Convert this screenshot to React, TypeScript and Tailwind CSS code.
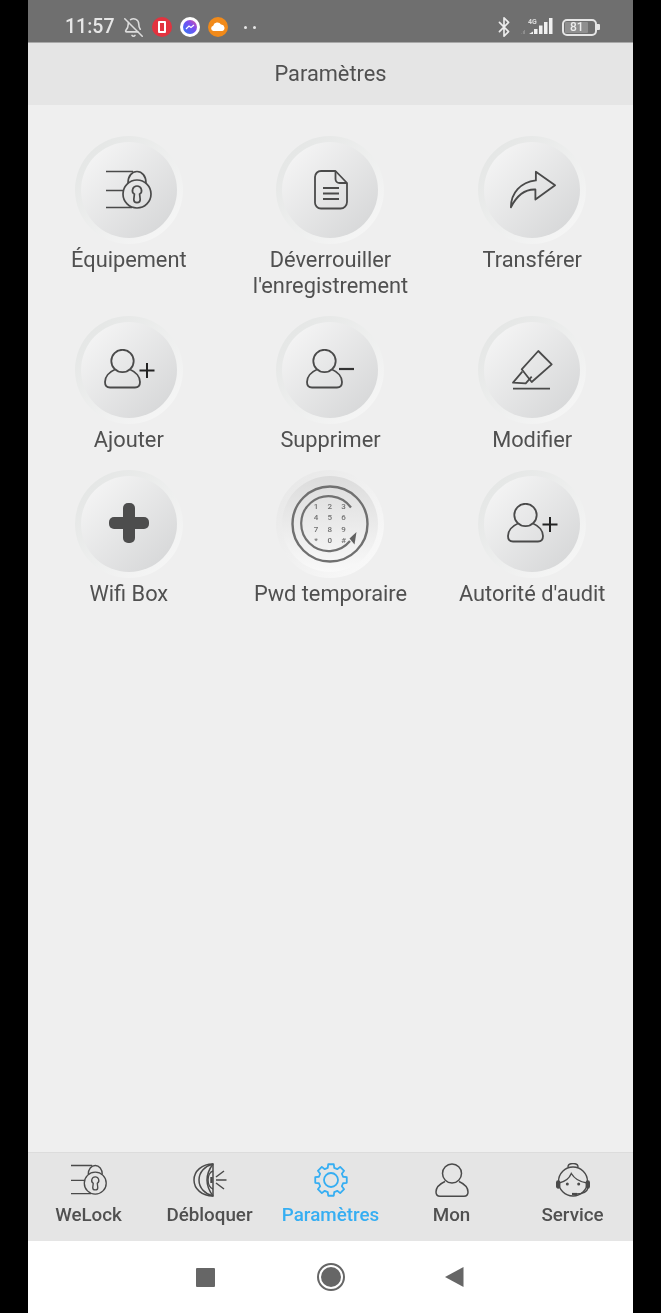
import React from "react";
import { BellOff, Bluetooth } from "lucide-react";

const INK = "#4a4a4a";

function PersonPath({ stroke = INK }: { stroke?: string }) {
  return (
    <g fill="none" stroke={stroke} strokeWidth={1.800} strokeLinejoin="round">
      <circle cx={18.500} cy={12} r={11.200} />
      <path d="M11 20.500C5 23 1 28 1 33c0 3.500 2 5.500 5 5.500h25c3 0 5-2 5-5.500 0-5-4-10-10-12.500" />
    </g>
  );
}

const LockIcon = ({ w = 46, h = 40 }: { w?: number; h?: number }) => (
  <svg width={w} height={h} viewBox="0 0 46 40" fill="none" stroke={INK} strokeWidth={1.700}>
    <path d="M0 1.500h27M0 20.500h18M0 37.500h26" />
    <circle cx={31} cy={24} r={14} />
    <path d="M22 13C22 6 26 1.500 31 1.500S40 6 40 13" />
    <path d="M31 16a4.500 4.500 0 0 1 2.600 8.200l.6 5.300a3.200 3.200 0 0 1-6.400 0l.6-5.300A4.500 4.500 0 0 1 31 16z" />
  </svg>
);

const DocIcon = () => (
  <svg className="ml-[1px]" width={34} height={40} viewBox="0 0 34 40" fill="none" stroke={INK} strokeWidth={1.800} strokeLinejoin="round">
    <path d="M7 1h14.500L33 13v19a6.500 6.500 0 0 1-6.500 6.500H7A6 6 0 0 1 1 32V7a6 6 0 0 1 6-6z" />
    <path d="M21.500 1v8a4 4 0 0 0 4 4H33" />
    <path d="M9 18h16M9 23.500h16M9 29h16" />
  </svg>
);

const ShareIcon = () => (
  <svg className="ml-[1px]" width={48} height={42} viewBox="0 0 50 42" fill="none" stroke={INK} strokeWidth={1.900} strokeLinejoin="round">
    <path d="M48 16 28 2v9C12 13 2 24 2 39c6-12 14-19 25.500-18.500V31z" />
  </svg>
);

const PersonPlus = () => (
  <svg className="mb-[2px] ml-[1px]" width={51} height={40} viewBox="0 0 51 40">
    <PersonPath />
    <path d="M43 14v15M35.500 21.500h15" stroke="#222" strokeWidth={2} fill="none" />
  </svg>
);

const PersonMinus = () => (
  <svg className="mb-[2px] ml-[1px]" width={50} height={40} viewBox="0 0 50 40">
    <PersonPath />
    <path d="M33 20h15" stroke="#333" strokeWidth={2.200} fill="none" />
  </svg>
);

const EditIcon = () => (
  <svg width={42} height={42} viewBox="0 0 42 42" fill="none" stroke={INK} strokeWidth={1.800} strokeLinejoin="round">
    <path d="M27.300 2 40.700 15.300 20.700 33 10.700 20.300z" />
    <path d="M11.300 22.700 2 33.700l12.700.6 6-6.600" />
    <path d="M2 39.700h37" />
  </svg>
);

const BigPlus = () => (
  <svg className="mb-[2px]" width={40} height={40} viewBox="0 0 40 40" fill="#4d4d4d">
    <rect x={14} y={0} width={12} height={40} rx={5} />
    <rect x={0} y={14} width={40} height={12} rx={5} />
  </svg>
);

const KeypadIcon = () => {
  const rows = [
    ["1", "2", "3"],
    ["4", "5", "6"],
    ["7", "8", "9"],
    ["*", "0", "#"],
  ];
  return (
    <svg width={80} height={80} viewBox="0 0 80 80" fill="none">
      <circle cx={40} cy={40} r={37.500} stroke="#707070" strokeWidth={2.400} />
      <path d="M61 23.500A27.500 27.500 0 1 0 60 57" stroke="#707070" strokeWidth={2.200} />
      <path d="M66.500 48 59.500 54.500 64.500 60.500z" fill="#606060" />
      {rows.map((r, i) =>
        r.map((d, j) => (
          <text
            key={d}
            x={26 + j * 13.800}
            y={24.500 + i * 11.600}
            textAnchor="middle"
            fontSize={8}
            fontWeight={500}
            fontFamily="Roboto, sans-serif"
            fill="#707070"
          >
            {d}
          </text>
        ))
      )}
    </svg>
  );
};

function gearPath() {
  const pts: string[] = [];
  for (let i = 0; i < 8; i++) {
    const a = (i * Math.PI) / 4;
    const add = (r: number, d: number) => {
      const t = a + (d * Math.PI) / 180;
      pts.push(`${(17 + r * Math.sin(t)).toFixed(2)} ${(17 - r * Math.cos(t)).toFixed(2)}`);
    };
    add(12.500, -15);
    add(16, -10);
    add(16, 10);
    add(12.500, 15);
  }
  return "M" + pts.join("L") + "Z";
}

const GearIcon = () => (
  <svg width={34} height={34} viewBox="0 0 34 34" fill="none" stroke="#36aef2" strokeWidth={1.800} strokeLinejoin="round">
    <path d={gearPath()} />
    <circle cx={17} cy={17} r={7} />
  </svg>
);

const UnlockIcon = () => (
  <svg width={34} height={34} viewBox="0 0 34 34" fill="none" stroke={INK} strokeWidth={1.500}>
    <path d="M20 1C9 1 1 8 1 17s8 16 19 16z" />
    <path d="M20 1C12 3 6 9 6 17s6 14 14 16" />
    <path d="M20 1c-3 4-6 10-6 16s3 12 6 16" />
    <path d="M20 8c-3 1-5 5-5 9s2 8 5 9" />
    <path d="M18.500 14v6" strokeWidth={2.400} />
    <path d="M23 17h10.500M23 14l8-6M23 20l8 6" />
  </svg>
);

const MonIcon = () => (
  <svg width={34} height={34} viewBox="0 0 34 34" fill="none" stroke={INK} strokeWidth={1.500}>
    <circle cx={17} cy={10.500} r={9.500} />
    <path d="M10 18.500C4.500 21 1 25 1 29c0 2.800 1.700 4.200 4 4.200h24c2.300 0 4-1.400 4-4.200 0-4-3.500-8-9-10.500" />
  </svg>
);

const ServiceIcon = () => (
  <svg width={34} height={34} viewBox="0 0 34 34" fill="none" stroke={INK} strokeWidth={1.400}>
    <circle cx={17} cy={18.500} r={14.500} />
    <path d="M12 4c0-2.500 2-3.500 5-3.500S22 1.500 22 4" />
    <path d="M3 20c5-1 10-4 12.300-9.500C18 15 24 19 31 20" />
    <rect x={0.700} y={18} width={3} height={7} rx={1.500} fill={INK} />
    <rect x={30.300} y={18} width={3} height={7} rx={1.500} fill={INK} />
    <path d="M32 25c-1 4-6 6-12 6" />
    <circle cx={11.300} cy={21} r={1.500} fill={INK} stroke="none" />
    <circle cx={22.700} cy={21} r={1.500} fill={INK} stroke="none" />
    <path d="M16 31h5" strokeWidth={2.200} />
  </svg>
);

function Tile({
  label,
  icon,
  bright,
}: {
  label: React.ReactNode;
  icon: React.ReactNode;
  bright?: boolean;
}) {
  return (
    <div className="flex flex-col items-center">
      <div
        className={
          bright
            ? "flex h-[108px] w-[108px] items-center justify-center rounded-full bg-gradient-to-br from-[#e6e6e6] to-[#fbfbfb]"
            : "flex h-[108px] w-[108px] items-center justify-center rounded-full bg-gradient-to-br from-[#e2e4e3] to-[#f8f8f8]"
        }
      >
        <div
          className={
            bright
              ? "flex h-[96px] w-[96px] items-center justify-center rounded-full bg-gradient-to-b from-[#dcdcdc] to-[#f9f9f9]"
              : "flex h-[96px] w-[96px] items-center justify-center rounded-full bg-gradient-to-br from-[#f8f8f8] to-[#d3d4d5]"
          }
        >
          {icon}
        </div>
      </div>
      <div className="mt-[3px] whitespace-nowrap text-center text-[21.800px] leading-[26px] text-[#505050]">{label}</div>
    </div>
  );
}

function NavItem({ label, icon, active }: { label: string; icon: React.ReactNode; active?: boolean }) {
  return (
    <div className="flex w-[121px] flex-col items-center">
      <div className="flex h-[34px] items-center justify-center">{icon}</div>
      <div className={active ? "mt-[4px] text-[18.800px] font-medium leading-[28px] text-[#36aef2]" : "mt-[4px] text-[18.800px] font-medium leading-[28px] text-[#505050]"}>
        {label}
      </div>
    </div>
  );
}

export default function App() {
  return (
    <div className="flex h-[1313px] w-[661px] overflow-hidden bg-black pl-[28px] pr-[28px] font-['Roboto',sans-serif] blur-[0.5px]">
      <div className="flex w-[605px] flex-col bg-[#efefef]">
        {/* status bar */}
        <div className="flex h-[43px] shrink-0 items-center justify-between border-b border-[#a9a9a9] bg-[#6f6f6f] pl-[37px] pr-[33px] pt-[12px]">
          <div className="flex items-center">
            <span className="w-[58px] text-[19.500px] font-medium leading-none text-[#e6e6e6]">11:57</span>
            <BellOff size={21} color="#dcdcdc" strokeWidth={1.800} />
            <div className="ml-[8px] flex h-[20px] w-[20px] items-center justify-center rounded-full bg-[#e2333f]">
              <div className="h-[12px] w-[8px] rounded-[1px] border-2 border-white" />
            </div>
            <svg className="ml-[8px]" width={20} height={20} viewBox="0 0 20 20">
              <defs>
                <linearGradient id="ms" x1="0" y1="1" x2="1" y2="0">
                  <stop offset="0" stopColor="#2f7cf6" />
                  <stop offset="0.6" stopColor="#7a4df0" />
                  <stop offset="1" stopColor="#e0569c" />
                </linearGradient>
              </defs>
              <circle cx={10} cy={10} r={10} fill="#fff" />
              <circle cx={10} cy={10} r={7} fill="url(#ms)" />
              <path d="M6 12l3-3 2 1.500L14 8" stroke="#fff" strokeWidth={1.200} fill="none" />
            </svg>
            <svg className="ml-[8px]" width={20} height={20} viewBox="0 0 20 20">
              <circle cx={10} cy={10} r={10} fill="#f18a1a" />
              <path d="M5.500 14a2.700 2.700 0 0 1-.3-5.300A4.200 4.200 0 0 1 13 7.600a3.300 3.300 0 0 1 1.300 6.400z" fill="#fff" />
            </svg>
            <div className="ml-[16px] flex gap-[6px]">
              <div className="h-[3px] w-[3px] rounded-full bg-[#e6e6e6]" />
              <div className="h-[3px] w-[3px] rounded-full bg-[#e6e6e6]" />
            </div>
          </div>
          <div className="flex items-center">
            <Bluetooth size={22} color="#ececec" strokeWidth={1.800} />
            <svg className="ml-[6px]" width={32} height={20} viewBox="0 0 32 20">
              <text x={7} y={6.500} fontSize={7} fontWeight={700} fill="#dcdcdc" fontFamily="Roboto, sans-serif">
                4G
              </text>
              <text x={0} y={17} fontSize={6} fill="#a5a5a5" fontFamily="Roboto, sans-serif">
                .ıl
              </text>
              <g fill="#f0f0f0">
                <path d="M8 17l4-2.500V17z" />
                <rect x={13} y={12} width={3.500} height={5} />
                <rect x={18} y={8.500} width={3.500} height={8.500} />
                <rect x={23} y={5} width={3.500} height={12} />
                <rect x={28} y={1} width={3.500} height={16} />
              </g>
            </svg>
            <div className="ml-[9px] flex items-center">
              <div className="flex h-[17px] w-[35px] items-center rounded-[5px] border-2 border-[#e6e6e6] p-[1px]">
                <div className="flex h-full w-[81%] items-center justify-center rounded-[1px] bg-[#8f8f8f] text-[12px] font-medium leading-none text-[#ececec]">
                  81
                </div>
              </div>
              <div className="h-[6px] w-[3px] rounded-r-[1px] bg-[#e6e6e6]" />
            </div>
          </div>
        </div>

        {/* header */}
        <div className="flex h-[62px] shrink-0 items-center justify-center bg-[#e5e5e5] pt-[1px] text-[21.800px] text-[#505050]">Paramètres</div>

        {/* grid */}
        <div className="grid flex-1 grid-cols-3 content-start gap-y-[17px] pt-[31px]">
          <Tile label="Équipement" icon={<LockIcon />} />
          <Tile label={<>Déverrouiller<br />l'enregistrement</>} icon={<DocIcon />} />
          <Tile label="Transférer" icon={<ShareIcon />} />
          <Tile label="Ajouter" icon={<PersonPlus />} />
          <Tile label="Supprimer" icon={<PersonMinus />} />
          <Tile label="Modifier" icon={<EditIcon />} />
          <Tile label="Wifi Box" icon={<BigPlus />} />
          <Tile label="Pwd temporaire" icon={<KeypadIcon />} bright />
          <Tile label="Autorité d'audit" icon={<PersonPlus />} />
        </div>

        {/* tab bar */}
        <div className="flex h-[89px] shrink-0 justify-center border-t border-[#dcdcdc] bg-[#e5e5e5] pt-[10px]">
          <NavItem label="WeLock" icon={<LockIcon w={36} h={34} />} />
          <NavItem label="Débloquer" icon={<UnlockIcon />} />
          <NavItem label="Paramètres" icon={<GearIcon />} active />
          <NavItem label="Mon" icon={<MonIcon />} />
          <NavItem label="Service" icon={<ServiceIcon />} />
        </div>

        {/* android nav */}
        <div className="flex h-[72px] shrink-0 items-center justify-center bg-white pr-[1px]">
          <div className="h-[19px] w-[19px] rounded-[1px] bg-[#666]" />
          <div className="ml-[102px] flex h-[28px] w-[28px] items-center justify-center rounded-full border-2 border-[#666]">
            <div className="h-[20px] w-[20px] rounded-full bg-[#666]" />
          </div>
          <svg className="ml-[100px]" width={19} height={20} viewBox="0 0 19 20">
            <path d="M18.500 0v20L0 10z" fill="#666" />
          </svg>
        </div>
      </div>
    </div>
  );
}
